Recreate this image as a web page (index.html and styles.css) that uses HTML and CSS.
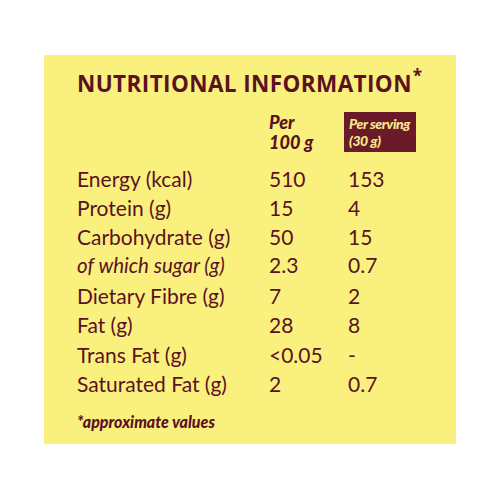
FILE: index.html
```html
<!DOCTYPE html>
<html>
<head>
	<title>Nutritional Information</title>
	<link rel="stylesheet" href="styles.css">
</head>
<body>
	<div class="panel">
		<h1 class="title">NUTRITIONAL INFORMATION<span class="star">*</span></h1>
		<table class="facts">
			<thead>
				<tr>
					<th></th>
					<th class="per-100"><div>Per</div><div>100 g</div></th>
					<th><div class="per-serving">Per serving<br>(30 g)</div></th>
				</tr>
			</thead>
			<tbody>
				<tr><td>Energy (kcal)</td><td>510</td><td>153</td></tr>
				<tr><td>Protein (g)</td><td>15</td><td>4</td></tr>
				<tr class="tight"><td>Carbohydrate (g)</td><td>50</td><td>15</td></tr>
				<tr class="sub"><td><em>of which sugar (g)</em></td><td>2.3</td><td>0.7</td></tr>
				<tr><td>Dietary Fibre (g)</td><td>7</td><td>2</td></tr>
				<tr><td>Fat (g)</td><td>28</td><td>8</td></tr>
				<tr><td>Trans Fat (g)</td><td>&lt;0.05</td><td>-</td></tr>
				<tr><td>Saturated Fat (g)</td><td>2</td><td>0.7</td></tr>
			</tbody>
		</table>
		<p class="note">*approximate values</p>
	</div>
</body>
</html>
```

FILE: styles.css
```css
body {
	margin: 0;
	padding: 55px 44px;
	background: #ffffff;
	font-family: Lato, "Open Sans", sans-serif;
	color: #5a1222;
}

.panel {
	background: #faf07e;
	height: 389px;
	padding: 14px 0 0 33px;
	box-sizing: border-box;
}

.title {
	margin: 0;
	font-family: "Open Sans", sans-serif;
	font-weight: 700;
	font-size: 22.5px;
	letter-spacing: 0.4px;
	line-height: 30px;
}

.star {
	font-size: 17px;
	line-height: 0;
	vertical-align: 10px;
	margin-left: 1px;
}

.facts {
	border-collapse: collapse;
	margin-top: 13px;
}

.facts th {
	padding: 0;
	text-align: left;
	vertical-align: top;
	font-style: italic;
	font-weight: 900;
}

.per-100 {
	font-size: 18px;
	line-height: 20px;
	padding-top: 2px;
}

.per-serving {
	background: #6b1a2a;
	color: #f6e98a;
	font-size: 14px;
	letter-spacing: -0.4px;
	line-height: 17px;
	width: 72px;
	height: 40px;
	margin-left: -4px;
	box-sizing: border-box;
	padding: 3px 0 0 5px;
}

.facts td {
	padding: 0;
	height: 29.5px;
	font-size: 21px;
	line-height: 24px;
	vertical-align: middle;
}

.facts td:first-child {
	width: 192px;
}

.facts td:nth-child(2) {
	width: 79px;
}

.facts tbody tr:first-child td {
	padding-top: 12px;
}

.facts .tight td {
	height: 28px;
}

.facts .sub td {
	height: 27px;
	padding-bottom: 3px;
}

.facts .sub td:first-child {
	font-size: 20.5px;
}

.note {
	margin: 13px 0 0;
	font-style: italic;
	font-weight: 900;
	font-size: 16px;
}
```
